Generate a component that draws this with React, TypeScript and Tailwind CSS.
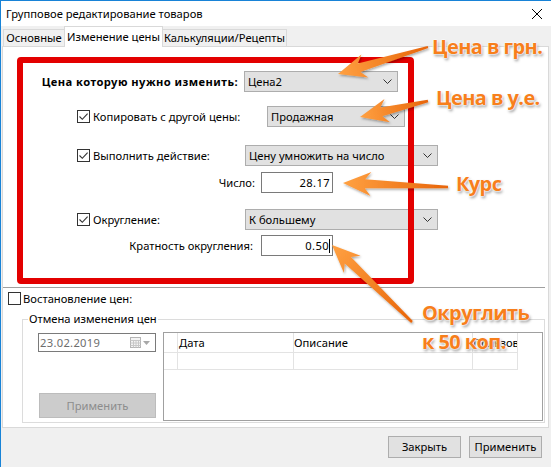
import React from 'react'

type Pt = [number, number]

// builds a tapered arrow polygon from the tail to the tip
function arrowPoints(t: Pt, p: Pt, w0 = 1.2, w1 = 4.5, headLen = 22, headW = 12, back = 6) {
  const dx = p[0] - t[0]
  const dy = p[1] - t[1]
  const len = Math.hypot(dx, dy)
  const ux = dx / len
  const uy = dy / len
  const nx = -uy
  const ny = ux
  const neck: Pt = [p[0] - ux * headLen, p[1] - uy * headLen]
  const pts: Pt[] = [
    [t[0] + nx * w0, t[1] + ny * w0],
    [neck[0] + nx * w1, neck[1] + ny * w1],
    [neck[0] + nx * headW - ux * back, neck[1] + ny * headW - uy * back],
    p,
    [neck[0] - nx * headW - ux * back, neck[1] - ny * headW - uy * back],
    [neck[0] - nx * w1, neck[1] - ny * w1],
    [t[0] - nx * w0, t[1] - ny * w0],
  ]
  return pts.map((q) => `${q[0].toFixed(1)},${q[1].toFixed(1)}`).join(' ')
}

const arrows: { t: Pt; p: Pt }[] = [
  { t: [428, 47], p: [338, 74] },
  { t: [428, 101], p: [360, 117] },
  { t: [448, 187], p: [343, 183] },
  { t: [412, 322], p: [332, 245] },
]

function Check({ checked }: { checked?: boolean }) {
  return (
    <span className="flex h-[13px] w-[13px] shrink-0 items-center justify-center border border-[#333333] bg-white">
      {checked && (
        <svg width="11" height="11" viewBox="0 0 11 11">
          <path d="M1.5 5.5 L4.3 8.3 L9.6 2.6" fill="none" stroke="#333333" strokeWidth="1.1" />
        </svg>
      )}
    </span>
  )
}

function Combo({ value, className }: { value: string; className: string }) {
  return (
    <div className={`flex h-[21px] items-center justify-between border border-[#adadad] bg-[#e1e1e1] pl-[3px] pr-[5px] ${className}`}>
      <span>{value}</span>
      <svg width="9" height="5" viewBox="0 0 9 5">
        <path d="M0.5 0.5 L4.5 4.5 L8.5 0.5" fill="none" stroke="#333333" strokeWidth="1" />
      </svg>
    </div>
  )
}

function Field({ value, caret }: { value: string; caret?: boolean }) {
  return (
    <div className="flex h-[21px] w-[72px] items-center justify-end border border-[#7a7a7a] bg-white pr-[2px] tracking-[0.4px]">
      <span>{value}</span>
      {caret && <span className="h-[14px] w-px bg-black" />}
    </div>
  )
}

function Button({ label }: { label: string }) {
  return (
    <div className="flex h-[22px] w-[73px] items-center justify-center border border-[#adadad] bg-[#e1e1e1]">
      {label}
    </div>
  )
}

const note =
  "pointer-events-none absolute whitespace-nowrap font-['Open_Sans',sans-serif] text-[20px] font-bold tracking-[-0.6px] text-[#f77f1c] [text-shadow:0_0_2px_#fff,0_0_2px_#fff,0_0_2px_#fff,1px_2px_3px_rgba(0,0,0,0.45)]"

export default function App() {
  return (
    <div className="relative h-[467px] w-[551px] overflow-hidden whitespace-nowrap border-l border-t border-[#1883d7] bg-[#f0f0f0] font-['Noto_Sans',sans-serif] text-[11.2px] leading-[16px] text-black">
      {/* Title bar */}
      <div className="flex h-[25px] items-center justify-between bg-white pl-[5px] pr-[9px]">
        <span>Групповое редактирование товаров</span>
        <svg width="10" height="10" viewBox="0 0 10 10">
          <path d="M0 0 L10 10 M10 0 L0 10" stroke="#000" strokeWidth="1" />
        </svg>
      </div>

      {/* Tabs */}
      <div className="flex h-[20px] items-end pl-[2px]">
        <div className="flex h-[17px] w-[62px] items-center justify-center border border-b-0 border-[#d9d9d9] bg-[#f0f0f0]">
          Основные
        </div>
        <div className="relative z-10 -mb-px -ml-px flex h-[21px] w-[99px] items-center justify-center border border-b-0 border-[#d9d9d9] bg-white">
          Изменение цены
        </div>
        <div className="-ml-px flex h-[17px] w-[125px] items-center justify-center border border-b-0 border-[#d9d9d9] bg-[#f0f0f0]">
          Калькуляции/Рецепты
        </div>
      </div>

      {/* Tab page */}
      <div className="ml-px h-[382px] w-[547px] border border-[#d9d9d9] bg-white">
        <div className="mt-[24px] flex h-[21px] items-center">
          <span className="w-[235px] text-right font-bold tracking-[0.45px]">Цена которую нужно изменить:</span>
          <Combo value="Цена2" className="ml-[6px] w-[154px]" />
        </div>

        <div className="mt-[14px] flex h-[21px] items-center">
          <div className="ml-[74px] flex w-[190px] items-center gap-[3px]">
            <Check checked />
            <span>Копировать с другой цены:</span>
          </div>
          <Combo value="Продажная" className="w-[138px]" />
        </div>

        <div className="mt-[18px] flex h-[21px] items-center">
          <div className="ml-[74px] flex w-[168px] items-center gap-[3px]">
            <Check checked />
            <span>Выполнить действие:</span>
          </div>
          <Combo value="Цену умножить на число" className="w-[193px]" />
        </div>

        <div className="mt-[6px] flex h-[21px] items-center">
          <span className="w-[252px] text-right">Число:</span>
          <div className="ml-[6px]">
            <Field value="28.17" />
          </div>
        </div>

        <div className="mt-[16px] flex h-[21px] items-center">
          <div className="ml-[74px] flex w-[168px] items-center gap-[3px]">
            <Check checked />
            <span>Округление:</span>
          </div>
          <Combo value="К большему" className="w-[193px]" />
        </div>

        <div className="mt-[5px] flex h-[21px] items-center">
          <span className="w-[250px] text-right">Кратность округления:</span>
          <div className="ml-[8px]">
            <Field value="0.50" caret />
          </div>
        </div>

        <div className="mt-[31px] h-px w-[542px] bg-[#a0a0a0]" />

        <div className="mt-[4px] flex h-[13px] items-center gap-[2px] pl-[5px]">
          <Check />
          <span>Востановление цен:</span>
        </div>

        {/* Group box */}
        <div className="relative ml-[19px] mt-[14px] h-[104px] w-[523px] border border-[#dcdcdc]">
          <span className="absolute -top-[9px] left-[5px] bg-white px-px">Отмена изменения цен</span>
          <div className="flex pl-[15px] pt-[12px]">
            <div className="flex w-[118px] flex-col">
              <div className="mt-px flex h-[19px] items-center justify-between border border-[#7a7a7a] pl-px pr-[5px] text-[#6d6d6d]">
                <span className="tracking-[0.3px]">23.02.2019</span>
                <span className="flex items-center gap-[2px]">
                  <svg width="11" height="11" viewBox="0 0 11 11">
                    <rect x="0.5" y="0.5" width="10" height="10" fill="#f4f4f4" stroke="#b5b5b5" />
                    <path d="M0.5 3.5 H10.5 M0.5 6 H10.5 M0.5 8.5 H10.5 M3.5 3.5 V10.5 M6 3.5 V10.5 M8.5 3.5 V10.5" stroke="#c8c8c8" strokeWidth="1" />
                  </svg>
                  <svg width="7" height="4" viewBox="0 0 7 4">
                    <path d="M0 0 H7 L3.5 4 Z" fill="#a8a8a8" />
                  </svg>
                </span>
              </div>
              <div className="ml-px mt-[41px] flex h-[25px] w-[117px] items-center justify-center border border-[#bcbcbc] bg-[#cccccc] text-[#8c8c8c]">
                Применить
              </div>
            </div>

            <div className="ml-[7px] h-[89px] w-[380px] border border-[#a0a0a0]">
              <div className="flex h-[20px]">
                <div className="w-[14px] border-b border-r border-[#e3e3e3]" />
                <div className="flex w-[116px] items-center border-b border-r border-[#e3e3e3] pl-[1px]">Дата</div>
                <div className="flex w-[179px] items-center border-b border-r border-[#e3e3e3]">Описание</div>
                <div className="flex w-[45px] items-center overflow-hidden border-b border-r border-[#e3e3e3]">Пользов</div>
              </div>
              <div className="flex h-[17px]">
                <div className="w-[14px] border-b border-r border-[#e3e3e3]" />
                <div className="w-[116px] border-b border-r border-[#e3e3e3]" />
                <div className="w-[179px] border-b border-r border-[#e3e3e3]" />
                <div className="w-[45px] border-b border-r border-[#e3e3e3]" />
              </div>
            </div>
          </div>
        </div>
      </div>

      {/* Footer buttons */}
      <div className="flex justify-end gap-[8px] pr-[9px] pt-[8px]">
        <Button label="Закрыть" />
        <Button label="Применить" />
      </div>

      {/* Annotations drawn over the dialog */}
      <div className="absolute left-[16px] top-[56px] h-[227px] w-[397px] rounded-[4px] border-[6px] border-[#e30000]" />

      <svg className="pointer-events-none absolute -left-px -top-px" width="551" height="467">
        <defs>
          <filter id="sh" x="-20%" y="-20%" width="140%" height="140%">
            <feDropShadow dx="1" dy="1.5" stdDeviation="1" floodColor="#000" floodOpacity="0.35" />
          </filter>
          {arrows.map((a, i) => (
            <linearGradient key={i} id={`g${i}`} gradientUnits="userSpaceOnUse" x1={a.t[0]} y1={a.t[1]} x2={a.p[0]} y2={a.p[1]}>
              <stop offset="0" stopColor="#e8650a" />
              <stop offset="1" stopColor="#ffa142" />
            </linearGradient>
          ))}
        </defs>
        {arrows.map((a, i) => (
          <polygon key={i} points={arrowPoints(a.t, a.p)} fill={`url(#g${i})`} filter="url(#sh)" />
        ))}
      </svg>

      <div className={`${note} left-[431px] top-[36px] leading-[20px]`}>Цена в грн.</div>
      <div className={`${note} left-[435px] top-[87px] leading-[20px]`}>Цена в у.е.</div>
      <div className={`${note} left-[455px] top-[173px] leading-[20px]`}>Курс</div>
      <div className={`${note} left-[421px] top-[297px] leading-[29px]`}>
        <div>Округлить</div>
        <div>к 50 коп.</div>
      </div>
    </div>
  )
}
